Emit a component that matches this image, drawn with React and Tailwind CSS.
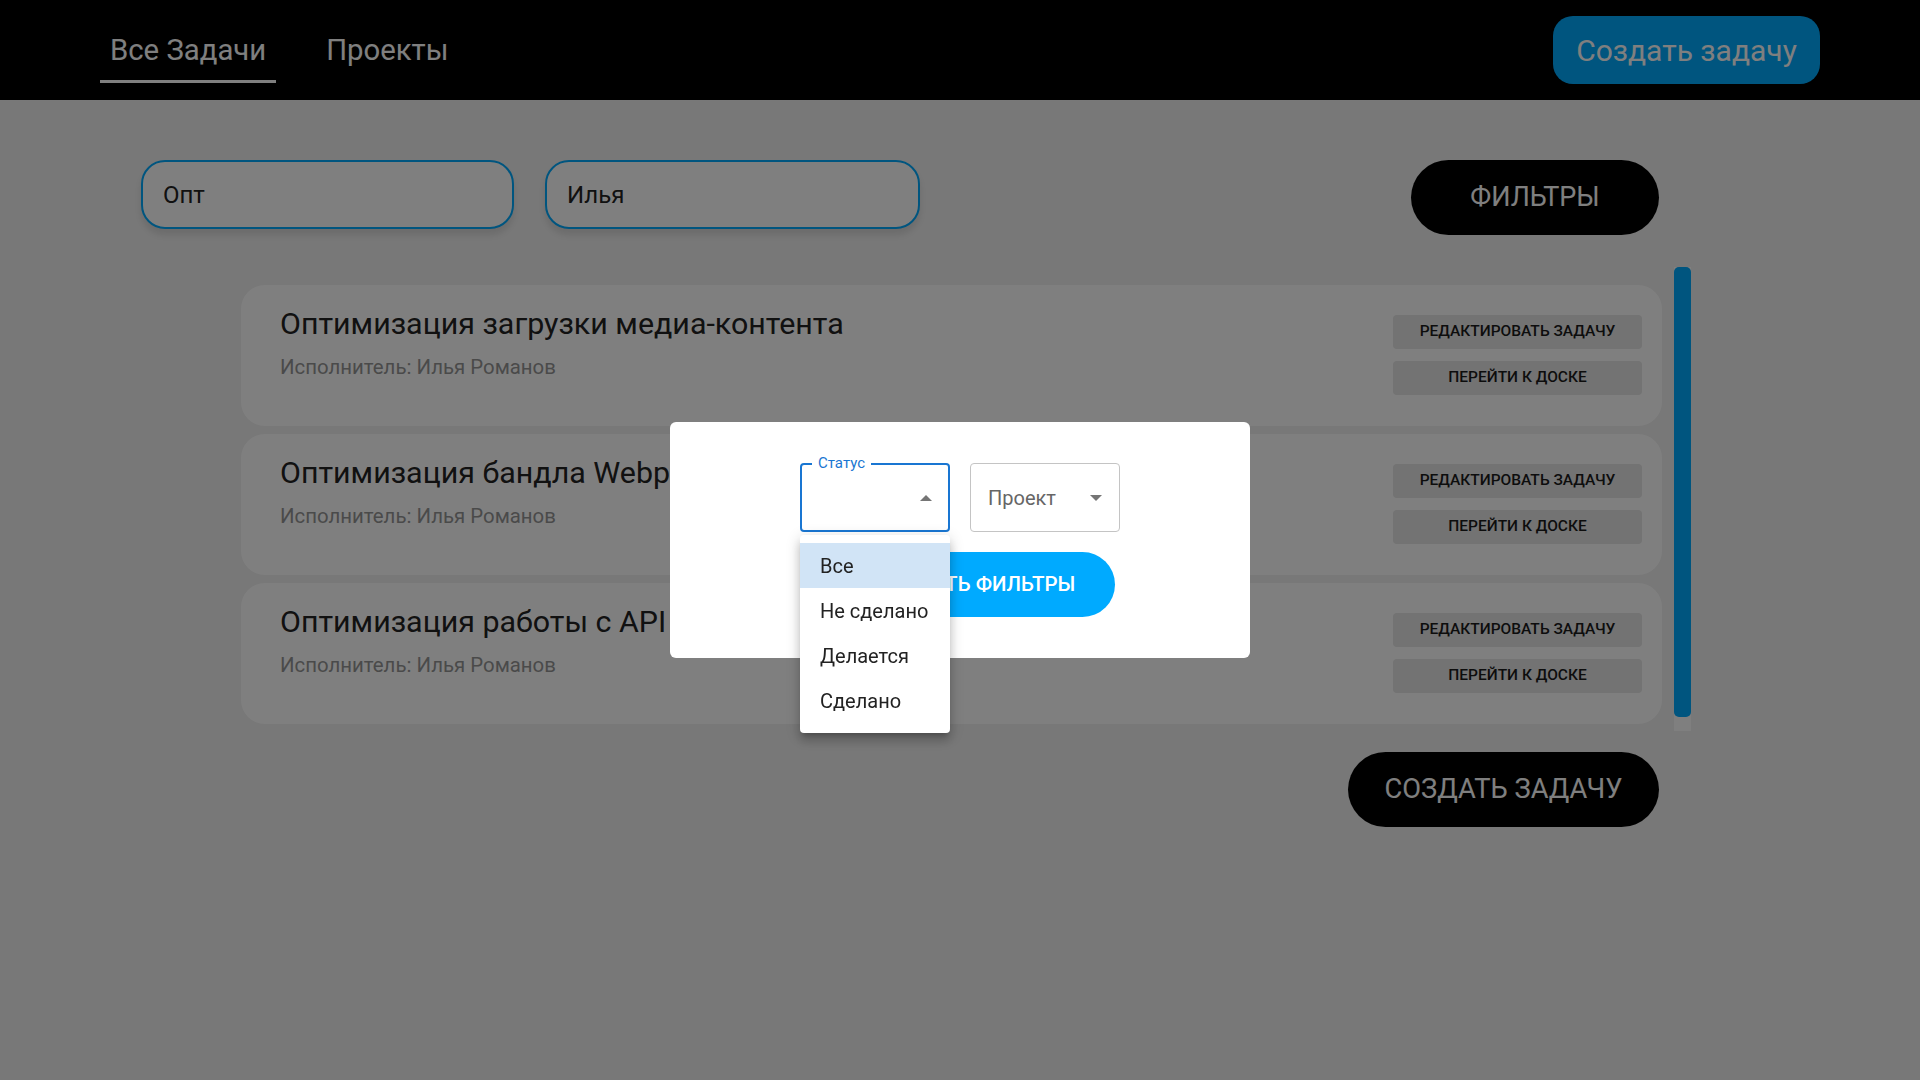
import React from 'react';

const tasks = [
  { id: 1, title: 'Оптимизация загрузки медиа-контента', assignee: 'Илья Романов' },
  { id: 2, title: 'Оптимизация бандла Webpack', assignee: 'Илья Романов' },
  { id: 3, title: 'Оптимизация работы с API', assignee: 'Илья Романов' },
];

const statuses = ['Все', 'Не сделано', 'Делается', 'Сделано'];

const Triangle = ({ up }) => (
  <svg width="12" height="6" viewBox="0 0 12 6" className="shrink-0">
    <path d={up ? 'M0 6 L6 0 L12 6 Z' : 'M0 0 L6 6 L12 0 Z'} fill="#757575" />
  </svg>
);

const TaskCard = ({ task }) => (
  <div className="h-[141px] shrink-0 rounded-[24px] bg-white pl-[39px] pr-[20px] flex justify-between">
    <div className="pt-[21px]">
      <h3 className="text-[30.4px] leading-[36px] text-[#222]">{task.title}</h3>
      <p className="mt-[13px] text-[20.4px] leading-[24px] text-[#959595]">Исполнитель: {task.assignee}</p>
    </div>
    <div className="pt-[30px] flex flex-col gap-[12px]">
      <button className="w-[249px] h-[34px] rounded-[4px] bg-[#e6e6e6] text-[15.5px] font-medium uppercase text-[#1a1a1a]">
        Редактировать задачу
      </button>
      <button className="w-[249px] h-[34px] rounded-[4px] bg-[#e6e6e6] text-[15.5px] font-medium uppercase text-[#1a1a1a]">
        Перейти к доске
      </button>
    </div>
  </div>
);

export default function App() {
  return (
    <div className="min-h-[1080px] bg-[#f0f0f0] font-['Roboto',sans-serif]">
      {/* шапка */}
      <header className="h-[100px] bg-black px-[100px] flex items-center">
        <nav className="flex items-center gap-[40px]">
          <button className="h-[66px] pt-[5px] px-[10px] flex items-center border-b-[3px] border-white text-[29.3px] text-white">
            Все Задачи
          </button>
          <button className="h-[66px] pt-[5px] px-[10px] flex items-center border-b-[3px] border-transparent text-[29.3px] text-white">
            Проекты
          </button>
        </nav>
        <button className="ml-auto w-[267px] h-[68px] rounded-[20px] bg-[#00aaff] text-[30px] text-white">
          Создать задачу
        </button>
      </header>

      {/* поиск и фильтры */}
      <main className="pt-[60px]">
        <div className="flex items-start pl-[141px] pr-[261px]">
          <input
            defaultValue="Опт"
            className="w-[373px] h-[69px] rounded-[24px] border-2 border-[#00aaff] bg-white px-[20px] text-[24px] text-[#222] outline-none shadow-[0_6px_6px_rgba(0,0,0,0.1)]"
          />
          <input
            defaultValue="Илья"
            className="ml-[31px] w-[375px] h-[69px] rounded-[24px] border-2 border-[#00aaff] bg-white px-[20px] text-[24px] text-[#222] outline-none shadow-[0_6px_6px_rgba(0,0,0,0.1)]"
          />
          <button className="ml-auto w-[248px] h-[75px] rounded-full bg-black text-[27px] uppercase text-white">
            Фильтры
          </button>
        </div>

        {/* список задач со своей полосой прокрутки */}
        <div className="mt-[32px] ml-[241px] w-[1450px] h-[464px] flex">
          <div className="flex-1 overflow-hidden pr-[12px]">
            <div className="pt-[18px] pb-[21px] flex flex-col gap-[8px]">
              {tasks.map((t) => (
                <TaskCard key={t.id} task={t} />
              ))}
            </div>
          </div>
          <div className="w-[17px] h-full bg-white">
            <div className="h-[450px] rounded-[5px] bg-[#00aaff]" />
          </div>
        </div>

        <div className="mt-[21px] flex justify-end pr-[261px]">
          <button className="w-[311px] h-[75px] rounded-full bg-black text-[27.3px] uppercase text-white">
            Создать задачу
          </button>
        </div>
      </main>

      {/* модалка фильтров */}
      <div className="fixed inset-0 bg-black/50 flex items-center justify-center">
        <div className="w-[580px] h-[236px] rounded-[6px] bg-white p-[41px] flex flex-col items-center gap-[20px]">
          <div className="flex gap-[20px]">
            <div className="relative w-[150px] h-[69px] rounded-[4px] border-2 border-[#1976d2] flex items-center justify-end pr-[16px]">
              <span className="absolute -top-[11px] left-[10px] bg-white px-[6px] text-[15px] leading-[18px] text-[#1976d2]">
                Статус
              </span>
              <Triangle up />
              <ul className="absolute z-10 -left-[2px] top-[70px] w-[150px] rounded-[4px] bg-white pt-[8px] pb-[10px] shadow-[0_5px_5px_-3px_rgba(0,0,0,0.2),0_8px_10px_1px_rgba(0,0,0,0.14),0_3px_14px_2px_rgba(0,0,0,0.12)]">
                {statuses.map((s, i) => (
                  <li
                    key={s}
                    className={`h-[45px] px-[20px] flex items-center text-[20px] text-[#222] ${i === 0 ? 'bg-[#d1e4f6]' : ''}`}
                  >
                    {s}
                  </li>
                ))}
              </ul>
            </div>
            <div className="w-[150px] h-[69px] rounded-[4px] border border-[#c4c4c4] pl-[17px] pr-[17px] flex items-center justify-between">
              <span className="text-[20px] text-[#666]">Проект</span>
              <Triangle />
            </div>
          </div>
          <button className="w-[310px] h-[65px] rounded-full bg-[#00aaff] text-[20.5px] font-medium uppercase text-white">
            Применить фильтры
          </button>
        </div>
      </div>
    </div>
  );
}
